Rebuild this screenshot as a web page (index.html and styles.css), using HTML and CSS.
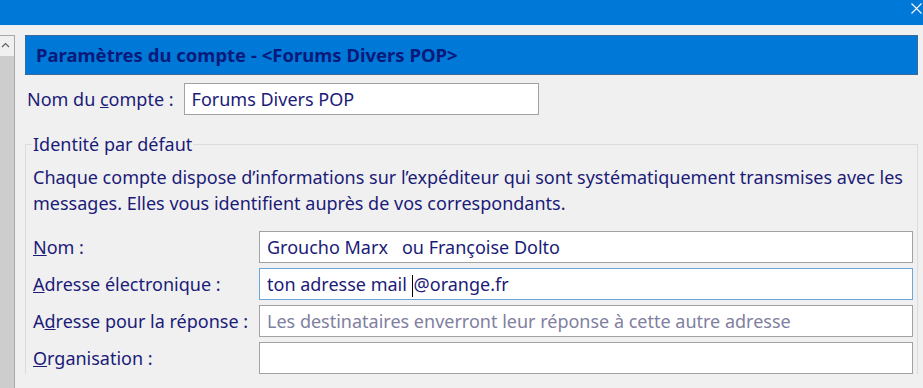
FILE: index.html
```html
<!DOCTYPE html>
<html lang="fr">
<head>
  <meta charset="UTF-8">
  <title>Paramètres du compte</title>
  <link rel="stylesheet" href="styles.css">
</head>
<body>
  <div class="titlebar">
    <svg class="close" width="11" height="11" viewBox="0 0 11 11"><path d="M0.5 0.5 L10.5 10.5 M10.5 0.5 L0.5 10.5" stroke="#fff" stroke-width="1.1"/></svg>
  </div>

  <div class="main">
    <div class="tree-scroll">
      <div class="arrow">
        <svg width="9" height="6" viewBox="0 0 9 6"><path d="M1 5 L4.5 1.5 L8 5" fill="none" stroke="#606060" stroke-width="1.2"/></svg>
      </div>
      <div class="thumb"></div>
    </div>

    <div class="content">
      <div class="header">Paramètres du compte - &lt;Forums Divers POP&gt;</div>

      <div class="account-row">
        <span class="label">Nom du <u>c</u>ompte :</span>
        <div class="field account-field">Forums Divers POP</div>
      </div>

      <fieldset class="identity">
        <legend>Identité par défaut</legend>
        <p class="intro">Chaque compte dispose d’informations sur l’expéditeur qui sont systématiquement transmises avec les messages. Elles vous identifient auprès de vos correspondants.</p>

        <div class="form-grid">
          <span class="label"><u>N</u>om :</span>
          <div class="field">Groucho Marx&nbsp;&nbsp; ou Françoise Dolto</div>

          <span class="label"><u>A</u>dresse électronique :</span>
          <div class="field focused">ton adresse mail <span class="caret"></span>@orange.fr</div>

          <span class="label">A<u>d</u>resse pour la réponse :</span>
          <div class="field placeholder">Les destinataires enverront leur réponse à cette autre adresse</div>

          <span class="label"><u>O</u>rganisation :</span>
          <div class="field"></div>
        </div>
      </fieldset>
    </div>
  </div>
</body>
</html>
```
FILE: styles.css
```css
body {
  margin: 0;
  background: #f0f0f0;
  font-family: "Noto Sans", "Open Sans", sans-serif;
  font-size: 18px;
  color: #1b1b78;
  overflow: hidden;
  height: 388px;
}

.titlebar {
  height: 25px;
  background: #0078d7;
  position: relative;
}

.close {
  position: absolute;
  right: 1px;
  top: 3px;
}

.main {
  display: flex;
  padding-top: 10px;
}

.tree-scroll {
  width: 14px;
  height: 360px;
  border-top: 1px solid #a8a8a8;
  border-right: 1px solid #a8a8a8;
  display: flex;
  flex-direction: column;
}

.arrow {
  height: 20px;
  background: #f0f0f0;
  padding: 6px 0 0 1px;
  box-sizing: border-box;
}

.arrow svg {
  display: block;
}

.thumb {
  flex: 1;
  background: #cdcdcd;
}

.content {
  flex: 1;
  padding: 0 5px 0 10px;
}

.header {
  height: 38px;
  background: #0078d7;
  border: 1px solid #3b6a9a;
  color: #0a1a7a;
  font-weight: bold;
  font-size: 18.5px;
  line-height: 38px;
  padding-left: 10px;
}

.account-row {
  display: flex;
  align-items: center;
  gap: 10px;
  margin-top: 8px;
  padding-left: 2px;
}

.field {
  height: 32px;
  box-sizing: border-box;
  background: #fff;
  border: 1px solid #a2a2a2;
  line-height: 30px;
  padding-left: 7px;
  white-space: nowrap;
  overflow: hidden;
}

.account-field {
  width: 355px;
}

.field.focused {
  border-color: #6aa6da;
}

.field.placeholder {
  color: #8080a0;
}

.caret {
  display: inline-block;
  width: 1px;
  height: 22px;
  background: #000;
  vertical-align: middle;
  margin-right: 1px;
}

.identity {
  margin: 17px 0 0 0;
  padding: 0 4px 0 7px;
  border: 1px solid #dcdcdc;
  border-bottom: none;
  min-width: 0;
}

.identity legend {
  padding: 0 1px;
  margin-left: -1px;
}

.intro {
  margin: 8px 0 0 0;
  line-height: 26px;
}

.form-grid {
  display: grid;
  grid-template-columns: 226px 1fr;
  row-gap: 5px;
  align-items: center;
  margin-top: 15px;
}
```
